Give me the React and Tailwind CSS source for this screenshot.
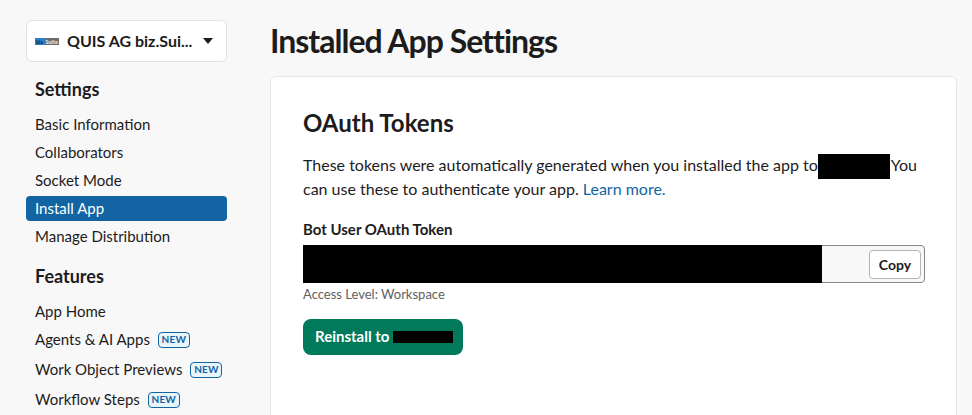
import { useState } from 'react';

const settingsLinks = ['Basic Information', 'Collaborators', 'Socket Mode', 'Install App', 'Manage Distribution'];

function NewBadge() {
  return (
    <span className="ml-[8px] flex h-[16px] w-[32px] items-center justify-center rounded-[4px] border border-[#1264a3] bg-[#e8f5fa] text-[10px] font-bold tracking-[0.2px] text-[#1264a3]">
      NEW
    </span>
  );
}

function NavLink({ label, active, badge, className = '' }) {
  return (
    <a className={`flex h-[25px] items-center rounded-[4px] pl-[9px] text-[15px] ${active ? 'bg-[#1264a3] text-white' : 'text-[#1d1c1d]'} ${className}`}>
      {label}
      {badge && <NewBadge />}
    </a>
  );
}

function AppLogo() {
  return (
    <svg width="24" height="7" viewBox="0 0 24 7" className="shrink-0">
      <rect width="10" height="7" fill="#2a7fc9" />
      <rect x="10" width="14" height="7" fill="#6b6b6b" />
      <text x="1" y="5.5" fontSize="5.5" fontWeight="700" fill="#0d2f4f">biz</text>
      <text x="10.5" y="5.5" fontSize="5.5" fontWeight="700" fill="#eeeeee">Suite</text>
    </svg>
  );
}

export default function App() {
  const [token] = useState('');

  return (
    <div className="flex h-[415px] w-[972px] overflow-hidden bg-[#f8f8f8] font-['Lato','Liberation_Sans',sans-serif] text-[#1d1c1d]">
      {/* Sidebar */}
      <aside className="ml-[26px] w-[201px] shrink-0 pt-[20px]">
        <button className="flex h-[42px] w-full items-center rounded-[6px] border border-[#e2e2e2] bg-white pl-[8px] text-[16px] font-bold">
          <AppLogo />
          <span className="ml-[8px]">QUIS AG biz.Sui...</span>
          <svg width="10" height="6" viewBox="0 0 10 6" className="ml-[11px]">
            <path d="M0 0h10L5 6z" fill="#1d1c1d" />
          </svg>
        </button>

        <h3 className="mt-[16px] pl-[9px] text-[18px] leading-[22px] font-bold">Settings</h3>
        <nav className="mt-[12px] flex flex-col gap-[3px]">
          {settingsLinks.map(label => (
            <NavLink key={label} label={label} active={label === 'Install App'} />
          ))}
        </nav>

        <h3 className="mt-[16px] pl-[9px] text-[18px] leading-[22px] font-bold">Features</h3>
        <nav className="mt-[12px] flex flex-col">
          <NavLink label="App Home" />
          <NavLink label="Agents & AI Apps" badge className="mt-[3px]" />
          <NavLink label="Work Object Previews" badge className="mt-[5px]" />
          <NavLink label="Workflow Steps" badge className="mt-[5px]" />
        </nav>
      </aside>

      {/* Main */}
      <main className="ml-[43px] w-[687px] shrink-0">
        <h1 className="mt-[21px] text-[32px] leading-[40px] font-bold tracking-[-1px]">Installed App Settings</h1>
        <section className="mt-[15px] h-[400px] rounded-[6px] border border-[#e8e8e8] bg-white px-[32px] pt-[31px]">
          <h2 className="text-[24px] leading-[30px] font-bold">OAuth Tokens</h2>
          <p className="mt-[15px] w-[622px] text-[16px] leading-[24px]">
            These tokens were automatically generated when you installed the app to
            <span className="mt-[1px] mr-[1px] -mb-[2px] inline-block h-[25px] w-[72px] bg-black align-top" />
            You can use these to authenticate your app.{' '}
            <a className="text-[#1264a3]">Learn more.</a>
          </p>
          <label className="mt-[17px] block text-[15px] leading-[22px] font-bold">Bot User OAuth Token</label>
          <div className="mt-[5px] flex h-[38px] w-[622px] items-center rounded-[4px] border border-[#868686] bg-[#f8f8f8]">
            <div className="-ml-[1px] h-[38px] w-[519px] shrink-0 bg-black">{token}</div>
            <button className="mt-[1px] mr-[3px] ml-auto flex h-[29px] w-[52px] items-center justify-center rounded-[4px] border border-[#b5b5b5] bg-white text-[14px] font-bold">
              Copy
            </button>
          </div>
          <p className="mt-[2px] text-[13px] leading-[18px] text-[#616061]">Access Level: Workspace</p>
          <button className="mt-[16px] flex h-[36px] w-[160px] items-center rounded-[8px] bg-[#007a5a] pb-[2px] pl-[12px] text-[15px] font-bold text-white">
            Reinstall to
            <span className="mt-[2px] ml-[4px] h-[12px] w-[60px] bg-black" />
          </button>
        </section>
      </main>
    </div>
  );
}
